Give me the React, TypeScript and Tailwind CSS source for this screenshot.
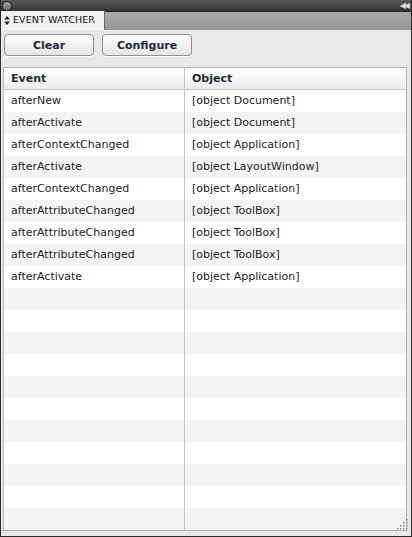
const rows: [string, string][] = [
  ["afterNew", "[object Document]"],
  ["afterActivate", "[object Document]"],
  ["afterContextChanged", "[object Application]"],
  ["afterActivate", "[object LayoutWindow]"],
  ["afterContextChanged", "[object Application]"],
  ["afterAttributeChanged", "[object ToolBox]"],
  ["afterAttributeChanged", "[object ToolBox]"],
  ["afterAttributeChanged", "[object ToolBox]"],
  ["afterActivate", "[object Application]"],
];

const TOTAL_ROWS = 20;

function Button({ label }: { label: string }) {
  return (
    <button className="w-[90px] h-[22px] rounded-[4px] border border-[#8f8f8f] bg-gradient-to-b from-[#ffffff] to-[#e4e4e4] text-[11px] font-bold leading-none text-[#1d2a3a] shadow-[0_1px_0_#fafafa]">
      {label}
    </button>
  );
}

export default function App() {
  const all = Array.from({ length: TOTAL_ROWS }, (_, i) => rows[i] ?? ["", ""]);

  return (
    <div
      className="w-[412px] h-[537px] flex flex-col bg-[#2a2a2a] px-px pb-px overflow-hidden"
      style={{ fontFamily: '"DejaVu Sans", Verdana, sans-serif' }}
    >
      {/* title bar */}
      <div className="h-[11px] flex items-center justify-between bg-gradient-to-b from-[#5a5a5a] to-[#343434]">
        <div className="ml-[1px] w-[10px] h-[10px] rounded-full bg-gradient-to-b from-[#a0a0a0] to-[#6e6e6e] border border-[#2a2a2a]" />
        <div className="mr-[3px] flex items-center text-[#d8d8d8] text-[8px] leading-none tracking-[-2px]">
          <span>◀</span>
          <span>◀</span>
        </div>
      </div>

      {/* tab row */}
      <div className="h-[19px] flex bg-gradient-to-b from-[#a9a9a9] to-[#979797] border-t border-[#262626]">
        <div className="w-[104px] -mt-px flex items-center gap-[3px] pl-[3px] bg-[#f1f1f1] border-r border-[#6a6a6a] text-[9.5px] text-[#111] tracking-[0.1px]">
          <svg width="6" height="9" viewBox="0 0 6 9">
            <path d="M0 3.5 L3 0 L6 3.5 Z M0 5.5 L3 9 L6 5.5 Z" fill="#222" />
          </svg>
          <span>EVENT WATCHER</span>
        </div>
      </div>

      {/* body */}
      <div className="flex-1 flex flex-col bg-[#e8e8e8] px-[2px] pb-[5px]">
        <div className="h-[37px] shrink-0 flex items-start gap-[8px] pt-[4px] pl-px">
          <Button label="Clear" />
          <Button label="Configure" />
        </div>

        <div className="relative flex-1 flex flex-col bg-white border border-[#b4b4b4] mr-[2px] overflow-hidden">
          <div className="h-[22px] shrink-0 flex bg-gradient-to-b from-[#ffffff] to-[#ececec] border-b border-[#c6c6c6] text-[11px] font-bold text-[#1d2a3a]">
            <div className="w-[181px] flex items-center pt-[2px] pl-[7px] border-r border-[#c6c6c6]">Event</div>
            <div className="flex-1 flex items-center pt-[2px] pl-[7px]">Object</div>
          </div>
          {all.map(([ev, obj], i) => (
            <div
              key={i}
              className={`h-[22px] shrink-0 flex text-[11px] text-[#222] ${i % 2 === 0 ? "bg-white" : "bg-[#f4f4f4]"}`}
            >
              <div className="w-[181px] flex items-center pl-[7px] border-r border-[#c6c6c6]">{ev}</div>
              <div className="flex-1 flex items-center pl-[7px]">{obj}</div>
            </div>
          ))}
          <div className="flex-1 flex">
            <div className="w-[181px] border-r border-[#c6c6c6]" />
          </div>
        </div>
      </div>

      {/* resize grip */}
      <div className="absolute left-[396px] top-[517px] w-[14px] h-[14px]">
        <svg width="14" height="14" viewBox="0 0 14 14">
          {[
            [10, 2], [10, 5], [7, 5], [10, 8], [7, 8], [4, 8], [10, 11], [7, 11], [4, 11], [1, 11],
          ].map(([x, y], k) => (
            <rect key={k} x={x} y={y} width="1.5" height="1.5" fill="#8a8a8a" />
          ))}
        </svg>
      </div>
    </div>
  );
}
